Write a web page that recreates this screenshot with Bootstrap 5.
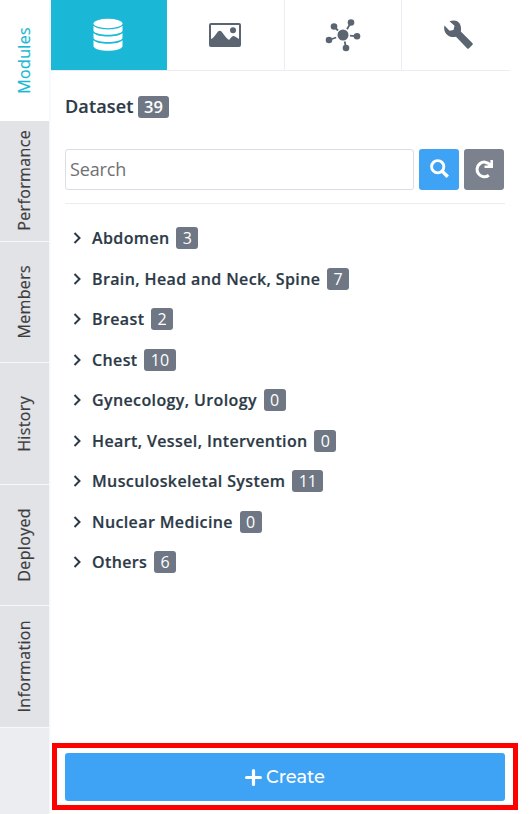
<!DOCTYPE html>
<html lang="en">
<head>
<meta charset="utf-8">
<meta name="viewport" content="width=device-width, initial-scale=1">
<title>Dataset modules</title>
<link href="https://cdn.jsdelivr.net/npm/bootstrap@5.3.0/dist/css/bootstrap.min.css" rel="stylesheet">
<style>
body{font-family:"Open Sans","Noto Sans",sans-serif;color:#2c3a47;background:#fff;overflow:hidden}
.rail{width:49px;background:#ecedf0;box-shadow:1px 0 2px #f1f4fa}
.rail-tab{height:121.4px;background:#e2e3e7;border-bottom:1px solid #f6f8fa;color:#3c3c3c;font-size:16px;font-weight:500;letter-spacing:.35px;-webkit-text-stroke:.2px}
.rail-tab.active{height:120.6px;background:#fff;border-bottom:0;color:#1ab8d6}
.rail-tab span{writing-mode:vertical-rl;transform:rotate(180deg);line-height:24px;margin-right:2px}
.panel{padding-left:2px}
.tabs{width:459px;height:71px;border-bottom:1px solid #ececf4;color:#5a6571;overflow:hidden}
.tab{border-left:1px solid #ececf4;flex:0 0 117px}
.tab.active{background:#1ab8d6;color:#fff;height:70px;border-left:0;flex:0 0 116px;padding-right:3px}
.tab:nth-child(2){border-left:0;padding-right:2px}
.tab:nth-child(4){padding-right:2px}
.body-area{margin-left:14px;width:440px}
.heading{margin-top:23px;height:24px;font-size:18px;font-weight:600;letter-spacing:.15px;-webkit-text-stroke:.2px}
.tag{background:#6e7783;color:#fff;border-radius:3px;height:22px;font-weight:400;font-size:16px;line-height:22px;padding:0 6.5px;letter-spacing:0;-webkit-text-stroke:0}
.tag-lg{font-weight:600;font-size:16.5px;padding:0 6.5px;margin:1px 0 0 4px}
.search-row{margin-top:31px;height:41px;gap:5px}
.search-box{border:1px solid #dcdce6;border-radius:3px;padding:0 4px 2px;font-size:18px;font-weight:400;letter-spacing:-.15px;width:349px;height:41px}
.search-box::placeholder{color:#6f7072;opacity:1}
.sq{width:40px;height:41px;border:0;border-radius:3px;padding:0 0 2px}
.blue{background:#3fa3f5}.grey{background:#7b828e}
.rule{border-top:1px solid #ececf0;margin-top:13px}
.tree{margin-top:14px}
.tree li{height:40.47px;font-size:16px;font-weight:600;letter-spacing:.38px;padding-left:7px;-webkit-text-stroke:.2px}
.tree svg{margin-right:10px}
.tree .tag{margin-left:6.700px}
.frame{margin:auto 12px 4px 1px;height:67px;border:5px solid #f00;padding:5px 8px 4px}
.create{border:0;border-radius:3px;color:#fff;font-family:Montserrat,"Open Sans",sans-serif;font-size:17.800px;font-weight:500;gap:4px}
</style>
</head>
<body>
<div class="d-flex vh-100">
  <nav class="rail flex-shrink-0 d-flex flex-column">
    <div class="rail-tab active d-flex align-items-center justify-content-center"><span>Modules</span></div>
    <div class="rail-tab d-flex align-items-center justify-content-center"><span>Performance</span></div>
    <div class="rail-tab d-flex align-items-center justify-content-center"><span>Members</span></div>
    <div class="rail-tab d-flex align-items-center justify-content-center"><span>History</span></div>
    <div class="rail-tab d-flex align-items-center justify-content-center"><span>Deployed</span></div>
    <div class="rail-tab d-flex align-items-center justify-content-center"><span>Information</span></div>
  </nav>
  <main class="panel flex-grow-1 d-flex flex-column">
    <div class="tabs d-flex">
      <div class="tab active d-flex align-items-center justify-content-center"><svg width="30" height="34" viewBox="0 0 30 34" fill="currentColor"><ellipse cx="15" cy="5.500" rx="14.500" ry="4.700"/><path d="M.5 7.800c4 4.800 25 4.800 29 0V13c-3 5-26 5-29 0zM.5 15c4 4.800 25 4.800 29 0v5.200c-3 5-26 5-29 0zM.5 22.200c4 4.800 25 4.800 29 0v6.300c-3 5.800-26 5.800-29 0z"/></svg></div>
      <div class="tab d-flex align-items-center justify-content-center"><svg width="32" height="24" viewBox="0 0 32 24" fill="currentColor"><path fill-rule="evenodd" d="M2 0h28q2 0 2 2v20q0 2-2 2H2q-2 0-2-2V2Q0 0 2 0zm0 2v14q2-.5 4-3.500l3-4q1.700-1.700 3.500 0l3 4q2.500 3.500 4.500 4.500l3-3.500q1.500-1.200 3 0L30 16V2z"/><circle cx="24" cy="7.300" r="3"/></svg></div>
      <div class="tab d-flex align-items-center justify-content-center"><svg width="36" height="34" viewBox="0 0 36 34" fill="currentColor"><path fill="none" stroke="currentColor" stroke-width="1.800" d="m9 8.500 4 4M26 4.500l-4 6.800M4 22l7.200-2.500M21 30l-1.300-6.500M32 18.300l-7-.7"/><circle cx="18" cy="17" r="5.500"/><circle cx="9" cy="8.500" r="3.300"/><circle cx="26" cy="4.500" r="3.300"/><circle cx="4" cy="22" r="3.300"/><circle cx="21" cy="30" r="3.300"/><circle cx="32" cy="18.300" r="3.300"/></svg></div>
      <div class="tab d-flex align-items-center justify-content-center"><svg width="30" height="30" viewBox="0 0 30 30" fill="currentColor"><path d="M5.500 1.200C10-.5 14 .5 15.800 3.800c1.300 2.500 1.500 5 1 7.700L28.300 23q1 1 0 2L25 28.300q-1 1-2 0L12 16.700c-3 .6-5.800.3-8-1.300C.7 13.200-.5 9.500.5 5.500l5 5.200 4-.8 1-4.200z"/></svg></div>
    </div>
    <div class="body-area">
      <div class="heading d-flex align-items-center">Dataset<span class="tag tag-lg">39</span></div>
      <div class="search-row d-flex">
        <input class="search-box" type="text" placeholder="Search" aria-label="Search">
        <button class="sq blue d-flex align-items-center justify-content-center" aria-label="Find"><svg width="19" height="19" viewBox="0 0 18 18" fill="none" stroke="#fff"><circle cx="7.300" cy="7.300" r="5.800" stroke-width="2.700"/><path d="m11.500 11.500 5.300 5.300" stroke-width="3.300"/></svg></button>
        <button class="sq grey d-flex align-items-center justify-content-center" aria-label="Reload"><svg width="20" height="20" viewBox="0 0 20 20" fill="none" stroke="#fff"><path stroke-width="3" d="M14.800 16.200A7.300 7.300 0 1 1 16 5.800"/><path stroke-width="2.600" d="M10.500 7.700h7.200V1"/><path fill="#fff" stroke="none" d="m13 7.500 5-5v5z"/></svg></button>
      </div>
      <div class="rule"></div>
      <ul class="tree list-unstyled mb-0" id="tree"></ul>
    </div>
    <div class="frame"><button class="create blue w-100 h-100 d-flex align-items-center justify-content-center p-0"><svg width="17" height="17" viewBox="0 0 16 16"><path d="M8 1.500v13M1.500 8h13" stroke="#fff" stroke-width="3" stroke-linecap="round"/></svg>Create</button></div>
  </main>
</div>
<script src="https://cdn.jsdelivr.net/npm/bootstrap@5.3.0/dist/js/bootstrap.bundle.min.js"></script>
<script>
const groups=[["Abdomen",3],["Brain, Head and Neck, Spine",7],["Breast",2],["Chest",10],["Gynecology, Urology",0],["Heart, Vessel, Intervention",0],["Musculoskeletal System",11],["Nuclear Medicine",0],["Others",6]];
document.getElementById("tree").innerHTML=groups.map(([name,n])=>`<li class="d-flex align-items-center"><svg width="10" height="12" viewBox="0 0 10 12" fill="none" stroke="#2c3a47" stroke-width="2"><path d="m2.500 1 5 5-5 5"/></svg><span>${name}</span><span class="tag">${n}</span></li>`).join("");
</script>
</body>
</html>
